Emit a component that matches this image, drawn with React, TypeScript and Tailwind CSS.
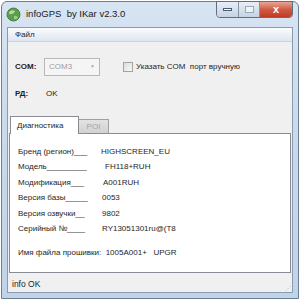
const rows = [
  { label: 'Бренд (регион)___', value: 'HIGHSCREEN_EU', pad: 'pl-[83px]' },
  { label: 'Модель_________', value: 'FH118+RUH', pad: 'pl-[87px]' },
  { label: 'Модификация___', value: 'A001RUH', pad: 'pl-[85px]' },
  { label: 'Версия базы_____', value: '0053', pad: 'pl-[84px]' },
  { label: 'Версия озвучки__', value: '9802', pad: 'pl-[84px]' },
  { label: 'Серийный №____', value: 'RY13051301ru@(T8', pad: 'pl-[84px]' },
];

const App = () => {
  return (
    <div className="w-[300px] h-[300px] bg-white p-[1px] font-['Liberation_Sans',Arial,sans-serif] text-[8px] text-[#1e1e1e]">
      {/* window frame */}
      <div className="w-[298px] h-[298px] flex flex-col rounded-t-[6px] border border-[#6e7f92] bg-gradient-to-b from-[#d7e4f2] via-[#c8d9ec] to-[#bfd3ea]">
        {/* title bar */}
        <div className="relative h-[25px] flex items-center pl-[4px] gap-[5px]">
          <svg width="15" height="15" viewBox="0 0 15 15">
            <circle cx="7.5" cy="7.5" r="6.5" fill="#5aa04a" />
            <path d="M3 5 Q6 2 9 4 Q8 7 5 7 Q3 8 3 5Z" fill="#b8d8a8" />
            <path d="M8 9 Q11 8 12 11 Q10 13 8 12Z" fill="#9cc98c" />
            <circle cx="7.5" cy="7.5" r="6.5" fill="none" stroke="#3d6d36" strokeWidth="0.8" />
          </svg>
          <span className="text-[9.5px] text-[#1a1a1a] whitespace-pre">infoGPS  by IKar v2.3.0</span>
          <div className="absolute top-[-1px] right-[5px] flex h-[17px] border border-[#5f6f82] rounded-b-[4px] overflow-hidden">
            <div className="w-[22px] flex items-center justify-center bg-gradient-to-b from-[#e8eef6] to-[#c5d3e3] border-r border-[#8393a6]">
              <div className="w-[9px] h-[3px] bg-white border border-[#4c5b6d]" />
            </div>
            <div className="w-[21px] flex items-center justify-center bg-gradient-to-b from-[#e8eef6] to-[#c5d3e3] border-r border-[#8393a6]">
              <div className="w-[9px] h-[7px] border border-[#9aa8b8] bg-white/60" />
            </div>
            <div className="w-[32px] flex items-center justify-center bg-gradient-to-b from-[#e9a595] via-[#cf5a45] to-[#c23a24] text-white text-[11px] font-bold leading-none">
              x
            </div>
          </div>
        </div>

        {/* client area */}
        <div className="flex-1 mx-[5px] flex flex-col border border-[#8b9bad]">
          {/* menu */}
          <div className="h-[14px] flex items-center pl-[7px] bg-gradient-to-b from-[#fbfcfe] to-[#dde6f1] border-b border-[#c9d3df] text-[#1e1e1e]">
            Файл
          </div>

          <div className="flex-1 bg-[#f0f0f0] flex flex-col pt-[15px]">
            {/* COM row */}
            <div className="flex items-center h-[19px] pl-[7px]">
              <span className="w-[29px] font-bold">COM:</span>
              <div className="w-[56px] h-[18px] border border-[#b8b8b8] bg-[#f5f5f5] flex items-center justify-between pl-[4px] pr-[4px] text-[#9c9c9c]">
                <span>COM3</span>
                <span className="text-[5px] text-[#a8a8a8]">▼</span>
              </div>
              <div className="ml-[23px] w-[10px] h-[10px] border border-[#a3a3a3] bg-gradient-to-br from-[#dcdcdc] to-[#f8f8f8]" />
              <span className="ml-[3px] whitespace-pre">Указать COM  порт вручную</span>
            </div>

            {/* RD row */}
            <div className="flex items-center h-[14px] mt-[11px] pl-[7px]">
              <span className="w-[31px] font-bold">РД:</span>
              <span>OK</span>
            </div>

            {/* tabs */}
            <div className="mt-[14px] px-[1px] flex flex-col flex-1">
              <div className="flex items-end h-[18px] pl-[1px]">
                <div className="h-[18px] w-[69px] bg-white border border-b-0 border-[#898c95] flex items-center pl-[6px] relative top-[1px] z-10">
                  Диагностика
                </div>
                <div className="h-[14px] w-[30px] bg-gradient-to-b from-[#e2e2e2] to-[#d2d2d2] border border-l-0 border-b-0 border-[#a0a0a0] flex items-center justify-center text-[#a5a5a5]">
                  POI
                </div>
              </div>
              <div className="flex-1 bg-white border border-[#898c95] pt-[10px] pl-[8px]">
                {rows.map((r) => (
                  <div key={r.label} className="relative h-[15.5px] flex items-center">
                    <span>{r.label}</span>
                    <span className={`absolute left-0 ${r.pad}`}>{r.value}</span>
                  </div>
                ))}
                <div className="h-[15.5px] mt-[8px] flex items-center whitespace-pre">
                  Имя файла прошивки:  1005A001+   UPGR
                </div>
              </div>
            </div>

            {/* status bar */}
            <div className="h-[19px] flex items-center pl-[4px] pt-[4px] text-[8.5px] relative">
              info OK
              <div className="absolute right-[1px] bottom-[1px] text-[6px] text-[#b0b0b0] leading-none">⋰</div>
            </div>
          </div>
        </div>
        <div className="h-[5px]" />
      </div>
    </div>
  );
};

export default App;
